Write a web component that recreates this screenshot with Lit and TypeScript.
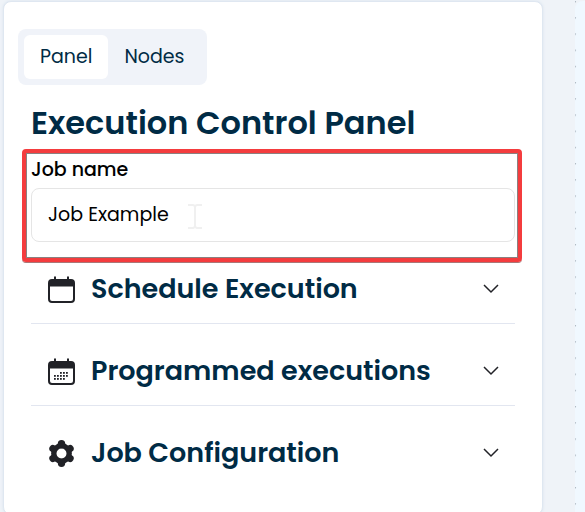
import { LitElement, html, css, svg } from "lit";
import { customElement, state } from "lit/decorators.js";

const calendar = svg`
  <path d="M6 0.500h2v4h-2zM19 0.500h2v4h-2z" fill="currentColor"/>
  <path fill-rule="evenodd" fill="currentColor" d="M4 3h19a4 4 0 0 1 4 4v16a4 4 0 0 1-4 4H4a4 4 0 0 1-4-4V7a4 4 0 0 1 4-4ZM2 10.500V23a2 2 0 0 0 2 2h19a2 2 0 0 0 2-2V10.500Z"/>`;

const dots = [
  [13, 15], [16, 15], [19, 15],
  [7, 18], [10, 18], [13, 18], [16, 18], [19, 18],
  [7, 21], [10, 21], [13, 21], [16, 21],
].map(([x, y]) => svg`<rect x=${x - 1} y=${y - 1} width="1.800" height="1.800" fill="currentColor"/>`);

const gear = svg`
  <g fill="none" stroke="currentColor">
    <circle cx="13.500" cy="13.500" r="7.700" stroke-width="5.400"/>
    <path d="M13.500 4.500V3.700M13.500 22.500V23.300M5.700 9L5 8.600M21.300 18L22 18.400M5.700 18L5 18.400M21.300 9L22 8.600" stroke-width="7.400" stroke-linecap="round"/>
  </g>`;

const sections = [
  { title: "Schedule Execution", icon: calendar },
  { title: "Programmed executions", icon: svg`${calendar}${dots}` },
  { title: "Job Configuration", icon: gear },
];

@customElement("app-root")
export class AppRoot extends LitElement {
  @state() private tab = "Panel";

  static styles = css`
    :host {
      display: flex;
      gap: 32px;
      min-height: 100vh;
      box-sizing: border-box;
      overflow: hidden;
      padding: 1px 0 0 3px;
      background: #eff3f8;
      color: #002b45;
      font-family: Poppins, Inter, sans-serif;
    }
    * { box-sizing: border-box; }
    button, input { font: inherit; color: inherit; }
    .card {
      flex: 1;
      min-width: 0;
      padding: 27px;
      background: #fff;
      border: 1px solid #dfe7f1;
      border-radius: 8px;
      box-shadow: 0 0 3px #d9e3ee;
    }
    .canvas {
      position: relative;
      width: 10px;
      background: #f0f8ff;
      border-top-left-radius: 8px;
    }
    .grid {
      position: absolute;
      inset: 0;
      width: 100%;
      height: 100%;
    }
    .tabs {
      display: flex;
      width: fit-content;
      margin: 0 0 14px -13px;
      padding: 6px;
      background: #f0f3f9;
      border-radius: 8px;
    }
    .tab {
      height: 44px;
      padding: 0 16px 1px;
      border: 0;
      border-radius: 6px;
      background: none;
      font-size: 19px;
    }
    .tab.active { background: #fff; }
    h1 {
      margin: 0 0 11px;
      font-size: 32px;
      line-height: 48px;
      font-weight: 600;
      white-space: nowrap;
    }
    .field { position: relative; color: #000; }
    .field::before {
      content: "";
      position: absolute;
      inset: -9px -7px -20px -9px;
      border: 4px solid #f43c3e;
      border-radius: 4px;
      box-shadow: inset 0 0 0 1px #8b8080, 0 1px 0 #a77;
      pointer-events: none;
    }
    label {
      display: block;
      margin-bottom: 6px;
      font-size: 19px;
      line-height: 24px;
      font-weight: 500;
    }
    input {
      display: block;
      width: 100%;
      height: 54px;
      padding: 0 16px 2px;
      border: 1px solid #e5e5e5;
      border-radius: 8px;
      background: #fff;
      font-size: 19px;
    }
    .caret {
      position: absolute;
      left: 157px;
      top: 46px;
      color: #f0f0f0;
    }
    h2 {
      margin: 0;
      padding: 29px 0 16px;
      border-bottom: 1px solid #e2e6f0;
      font-size: 27px;
      line-height: 36px;
      font-weight: 600;
    }
    h2:last-child { border-bottom: 0; }
    .toggle {
      display: flex;
      align-items: center;
      gap: 16px;
      width: 100%;
      height: 36px;
      padding: 0 16px 0 17px;
      border: 0;
      background: none;
      text-align: left;
      white-space: nowrap;
    }
    .title { flex: 1; }
    .icon, .chevron { flex: none; color: #212227; }
  `;

  render() {
    return html`
      <main class="card">
        <nav class="tabs">
          ${["Panel", "Nodes"].map((name) => html`
            <button class="tab ${this.tab === name ? "active" : ""}" @click=${() => (this.tab = name)}>${name}</button>`)}
        </nav>
        <h1>Execution Control Panel</h1>
        <div class="field">
          <label for="job">Job name</label>
          <input id="job" type="text" value="Job Example">
          <svg class="caret" width="14" height="25" viewBox="0 0 14 25" fill="none" stroke="currentColor" stroke-width="2" aria-hidden="true">
            <path d="M0 1h5l2 1l2-1h5M7 2v21M0 24h5l2-1l2 1h5"/>
          </svg>
        </div>
        ${sections.map((s) => html`
          <h2><button class="toggle">
            <svg class="icon" width="27" height="27" viewBox="0 0 27 27" aria-hidden="true">${s.icon}</svg>
            <span class="title">${s.title}</span>
            <svg class="chevron" width="16" height="10" viewBox="0 0 16 10" fill="none" stroke="currentColor" stroke-width="1.500" aria-hidden="true">
              <path d="M1 1l7 7l7-7"/>
            </svg>
          </button></h2>`)}
      </main>
      <aside class="canvas">
        <svg class="grid" aria-hidden="true">
          <pattern id="dots" width="16.200" height="16.200" patternUnits="userSpaceOnUse">
            <circle cx="0.400" cy="0.700" r="0.700" fill="#a9b3bd"/>
          </pattern>
          <rect width="100%" height="100%" fill="url(#dots)"/>
        </svg>
      </aside>
    `;
  }
}
